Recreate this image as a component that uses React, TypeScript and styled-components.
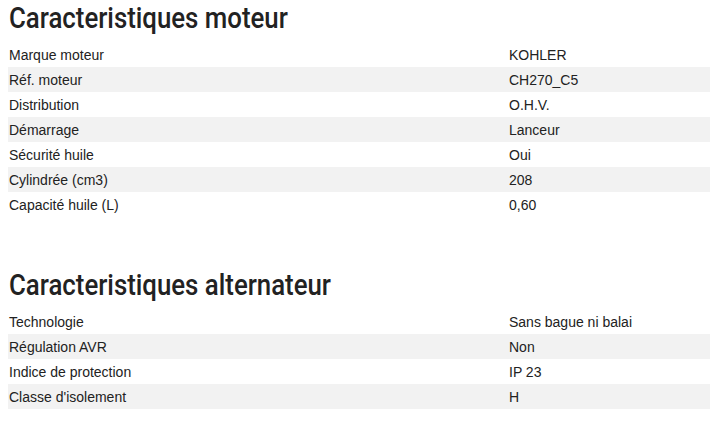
import React from 'react';
import styled, { createGlobalStyle } from 'styled-components';

const GlobalStyle = createGlobalStyle`
  html, body {
    margin: 0;
    padding: 0;
    background: #ffffff;
  }
  body {
    font-family: 'Liberation Sans', Arial, sans-serif;
    color: #222222;
  }
`;

const Page = styled.div`
  width: 710px;
  padding-left: 8px;
  box-sizing: border-box;
`;

const Section = styled.section<{ $gap: number }>`
  display: flex;
  flex-direction: column;
  padding-top: ${props => props.$gap}px;
`;

const Title = styled.h2`
  margin: 0;
  height: 42px;
  padding-left: 1px;
  font-family: Roboto, 'Liberation Sans', Arial, sans-serif;
  font-weight: 500;
  font-size: 30px;
  line-height: 36px;
  color: #222222;
`;

// no condensed face is installed, so the heading is squeezed horizontally
const TitleText = styled.span`
  display: inline-block;
  transform: scaleX(0.86);
  transform-origin: left center;
  white-space: nowrap;
`;

const Table = styled.div`
  display: flex;
  flex-direction: column;
`;

const Row = styled.div<{ $shade: boolean }>`
  display: grid;
  grid-template-columns: 500px 1fr;
  height: 25px;
  align-items: center;
  background: ${props => (props.$shade ? '#f2f2f2' : 'transparent')};
  font-size: 14px;
  color: #222222;

  > * {
    padding-left: 1px;
  }
`;

const Label = styled.span``;
const Value = styled.span``;

const engine = [
  ['Marque moteur', 'KOHLER'],
  ['Réf. moteur', 'CH270_C5'],
  ['Distribution', 'O.H.V.'],
  ['Démarrage', 'Lanceur'],
  ['Sécurité huile', 'Oui'],
  ['Cylindrée (cm3)', '208'],
  ['Capacité huile (L)', '0,60'],
];

const alternator = [
  ['Technologie', 'Sans bague ni balai'],
  ['Régulation AVR', 'Non'],
  ['Indice de protection', 'IP 23'],
  ['Classe d\'isolement', 'H'],
];

const SpecTable = ({ title, rows, gap }) => (
  <Section $gap={gap}>
    <Title>
      <TitleText>{title}</TitleText>
    </Title>
    <Table>
      {rows.map(([label, value], i) => (
        <Row key={label} $shade={i % 2 === 1}>
          <Label>{label}</Label>
          <Value>{value}</Value>
        </Row>
      ))}
    </Table>
  </Section>
);

export default function App() {
  return (
    <Page>
      <GlobalStyle />
      <SpecTable title="Caracteristiques moteur" rows={engine} gap={0} />
      <SpecTable title="Caracteristiques alternateur" rows={alternator} gap={50} />
    </Page>
  );
}
